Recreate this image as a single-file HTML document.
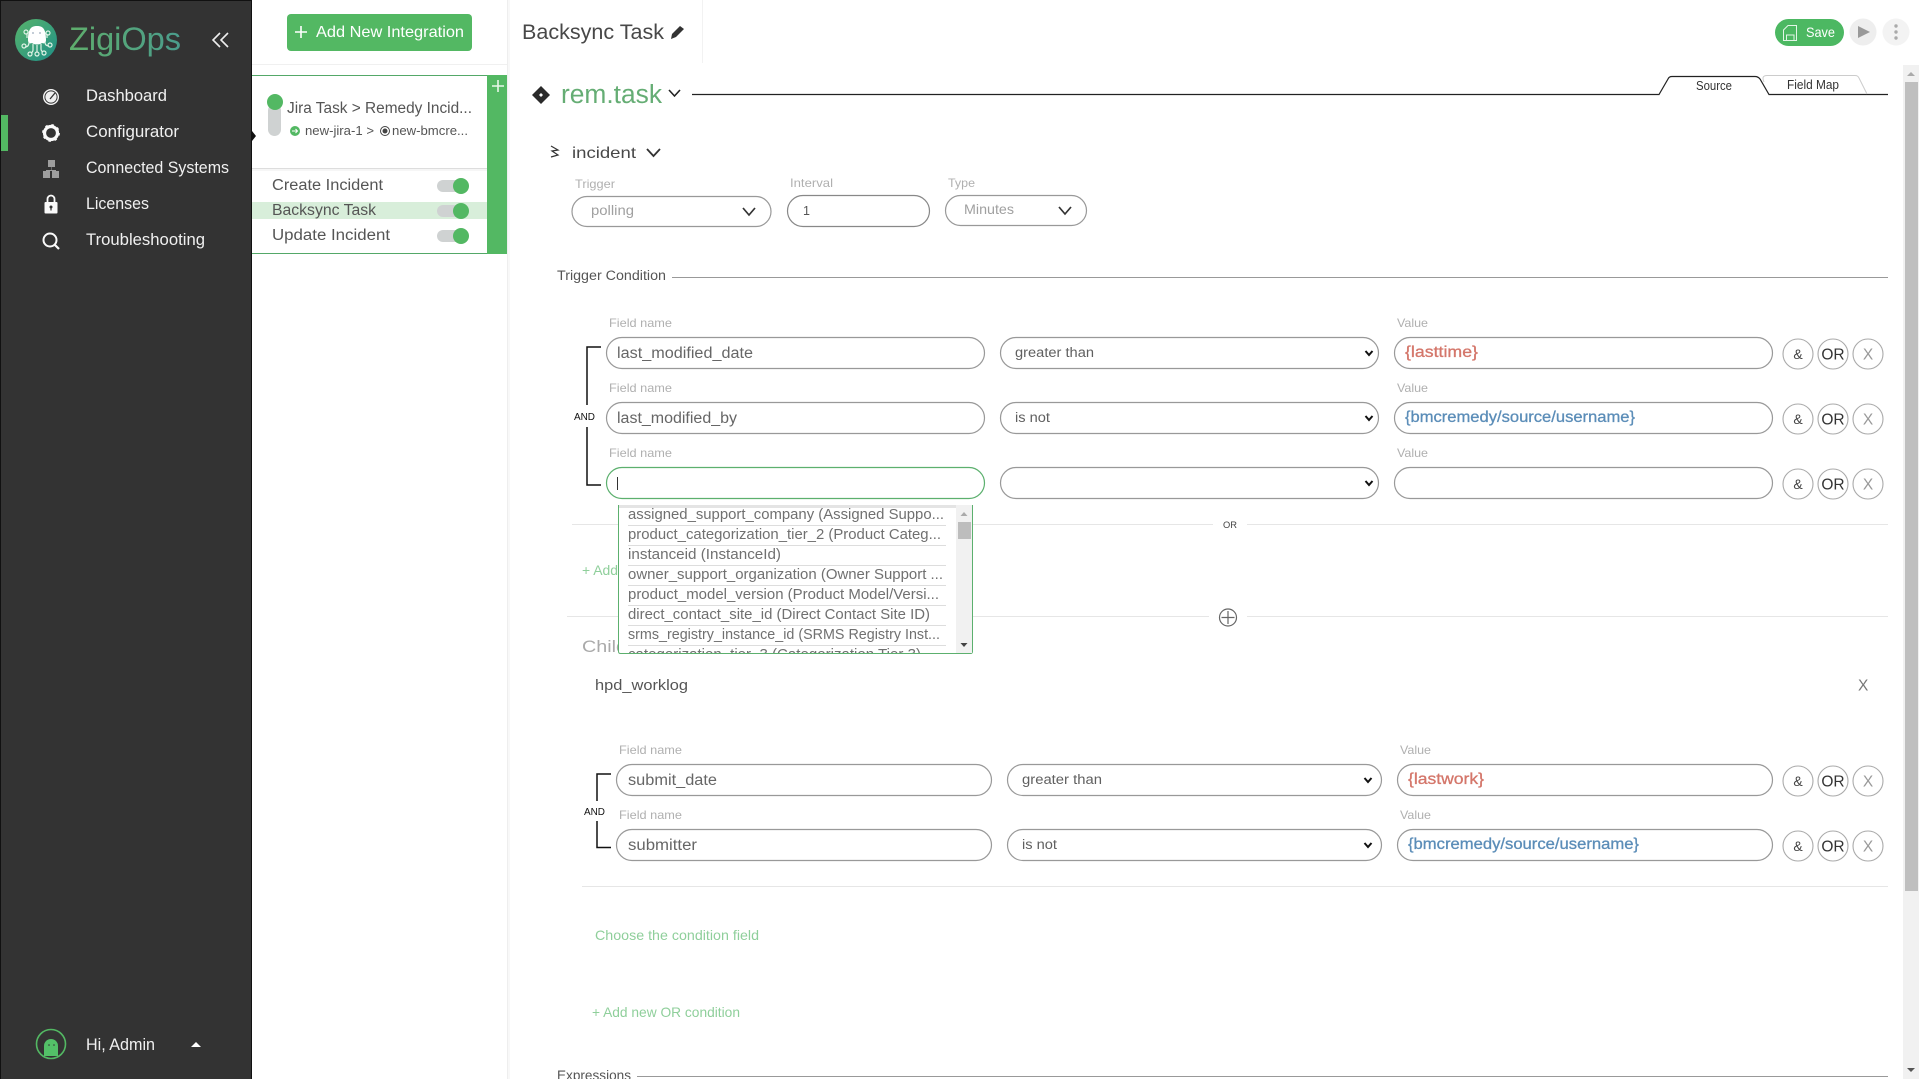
<!DOCTYPE html>
<html lang="en"><head><meta charset="utf-8"><title>ZigiOps</title>
<style>
html,body{margin:0;padding:0;background:#fff;overflow:hidden}
svg{display:block}
text{font-family:"Liberation Sans",sans-serif;fill:#555;white-space:pre}
.l{font-size:12px;fill:#b0b0b0}
.v{font-size:15.5px;fill:#666}
.s{font-size:13.5px;fill:#606060}
.n{font-size:16.5px;fill:#f0f0f0}
.i{fill:none;stroke:#999;stroke-width:1.2}
.c{fill:#fff;stroke:#aaa;stroke-width:1.1}
.b{font-size:14px;fill:#444;text-anchor:middle}
.o{font-size:15.5px;fill:#333;text-anchor:middle}
.x{font-size:15.5px;fill:#999;text-anchor:middle}
.d{font-size:14.5px;fill:#707070}
.k{fill:none;stroke:#111;stroke-width:1.5}
.h{fill:none;stroke:#111;stroke-width:2}
.g{font-size:14px;fill:#8fcf9b}
.r{font-size:15.5px;fill:#d4766a;stroke:#d4766a;stroke-width:.3}
.u{font-size:15.5px;fill:#5b8db8;stroke:#5b8db8;stroke-width:.3}
</style></head><body>
<svg width="1919" height="1079" viewBox="0 0 1919 1079" xmlns="http://www.w3.org/2000/svg">
<defs>
<linearGradient id="lg" x1="0" y1="0" x2="1" y2="1"><stop offset="0" stop-color="#58b46c"/><stop offset="1" stop-color="#1f8f86"/></linearGradient>
<linearGradient id="tg" gradientUnits="userSpaceOnUse" x1="69" y1="0" x2="181" y2="0"><stop offset="0" stop-color="#5fae6c"/><stop offset="1" stop-color="#4a9c8c"/></linearGradient>
<clipPath id="dd"><rect x="619" y="505" width="338" height="148"/></clipPath>
</defs>
<rect width="1919" height="1079" fill="#fff"/>

<!-- sidebar -->
<rect x="0" y="0" width="252" height="1079" fill="#333"/>
<rect x="0" y="0" width="252" height="1" fill="#111"/>
<rect x="0" y="0" width="1" height="1079" fill="#111"/>
<rect x="251" y="0" width="1" height="1079" fill="#111"/>
<circle cx="36" cy="40" r="21" fill="url(#lg)"/>
<path d="M28 40C28 29 31 26 37 26S46 29 46 40C46 43 44 44 42 43 40 45 34 45 32 43 30 44 28 43 28 40Z" fill="#fff"/>
<g fill="none" stroke="#dff3e6" stroke-width="1.2"><path d="M29 42Q29 47 25 47"/><path d="M33 44V50Q33 52 31 53"/><path d="M37 45V52"/><path d="M41 44V49Q41 51 43 52"/><path d="M45 42Q45 46 49 46"/><path d="M27 38V34"/><path d="M47 38V34"/><circle cx="26" cy="32" r="2"/><circle cx="48" cy="33" r="2"/><circle cx="24" cy="46" r="2"/><circle cx="50" cy="45" r="2"/><circle cx="30" cy="54" r="2"/><circle cx="37" cy="54" r="2"/><circle cx="44" cy="53" r="2"/></g>
<circle cx="33" cy="33" r=".9" fill="#9ab"/><circle cx="40" cy="33" r=".9" fill="#9ab"/>
<text x="69" y="50" font-size="32" style="fill:url(#tg)" textLength="112" lengthAdjust="spacingAndGlyphs">ZigiOps</text>
<path d="M220 33L213 40 220 47M228 33L221 40 228 47" fill="none" stroke="#eee" stroke-width="1.6"/>

<rect x="1" y="115" width="7" height="36" fill="#53b863"/>
<text class="n" x="86" y="101" textLength="81" lengthAdjust="spacingAndGlyphs">Dashboard</text>
<text class="n" x="86" y="137" textLength="93" lengthAdjust="spacingAndGlyphs">Configurator</text>
<text class="n" x="86" y="173" textLength="143" lengthAdjust="spacingAndGlyphs">Connected Systems</text>
<text class="n" x="86" y="209" textLength="63" lengthAdjust="spacingAndGlyphs">Licenses</text>
<text class="n" x="86" y="245" textLength="119" lengthAdjust="spacingAndGlyphs">Troubleshooting</text>
<!-- nav icons -->
<circle cx="51" cy="97" r="8" fill="#f5f5f5"/><circle cx="51" cy="97" r="6.6" fill="#333"/><circle cx="51" cy="97" r="5.6" fill="#f0f0f0"/><path d="M50 99L55 93" stroke="#333" stroke-width="1.3"/>
<circle cx="51" cy="133" r="6.5" fill="none" stroke="#fafafa" stroke-width="3.2"/><circle cx="51" cy="133" r="8" fill="none" stroke="#fafafa" stroke-width="1.8" stroke-dasharray="2.5 3.8"/>
<g fill="#9e9e9e"><rect x="48" y="160" width="7" height="7"/><rect x="43" y="171" width="7" height="7"/><rect x="52" y="171" width="7" height="7"/><path d="M51 167V170H46V171H56V170H51.500V167Z"/></g>
<rect x="44.500" y="202" width="13" height="11.500" rx="1" fill="#fafafa"/><path d="M47.500 202V199A3.500 3.500 0 0 1 54.500 199V202" fill="none" stroke="#fafafa" stroke-width="1.800"/><circle cx="51" cy="207" r="1.500" fill="#333"/><rect x="50.400" y="207" width="1.200" height="3.500" fill="#333"/>
<circle cx="50" cy="240" r="6.500" fill="none" stroke="#fafafa" stroke-width="2"/><path d="M54.500 244.500L59 249" stroke="#fafafa" stroke-width="2.200"/>
<!-- user -->
<circle cx="51" cy="1044" r="14.500" fill="none" stroke="#53b863" stroke-width="1.600"/>
<path d="M44 1056V1046A7 7 0 0 1 58 1046V1056Z" fill="#53c168"/><circle cx="49" cy="1045" r=".8" fill="#333"/><circle cx="54" cy="1045" r=".8" fill="#333"/>
<text class="n" x="86" y="1050" textLength="69" lengthAdjust="spacingAndGlyphs">Hi, Admin</text>
<path d="M191 1047L196 1042 201 1047Z" fill="#fff"/>
<path d="M252 131L256 136 252 141Z" fill="#111"/>

<!-- panel -->
<rect x="507" y="0" width="1" height="1079" fill="#eee"/>
<rect x="508" y="0" width="2" height="1079" fill="#f8f8f8"/>
<rect x="287" y="14" width="185" height="37" rx="4" fill="#53b863"/>
<path d="M301 26V38M295 32H307" stroke="#fff" stroke-width="1.600"/>
<text x="316" y="37" font-size="16" style="fill:#fff" textLength="148" lengthAdjust="spacingAndGlyphs">Add New Integration</text>
<rect x="252" y="64" width="255" height="1" fill="#f0f0f0"/>
<rect x="252" y="75" width="235" height="1" fill="#53a868"/>
<rect x="252" y="253" width="235" height="1" fill="#53a868"/>
<rect x="487" y="75" width="20" height="179" fill="#53b863"/>
<path d="M498 80V92M492 86H504" stroke="#e8f7ea" stroke-width="1.600"/>
<rect x="268" y="104" width="13" height="32" rx="6.500" fill="#cfd2d2"/>
<circle cx="275" cy="102" r="8" fill="#53b863"/>
<text x="287" y="113" font-size="15.500" textLength="185" lengthAdjust="spacingAndGlyphs">Jira Task &gt; Remedy Incid...</text>
<circle cx="295" cy="131" r="5" fill="#53b863"/><path d="M292 131H297M295.500 129L297.500 131 295.500 133" fill="none" stroke="#fff" stroke-width="1"/>
<text x="305" y="135" font-size="13" textLength="69" lengthAdjust="spacingAndGlyphs">new-jira-1 &gt;</text>
<circle cx="385" cy="131" r="4.500" fill="none" stroke="#444" stroke-width="1"/><circle cx="385" cy="131" r="2.500" fill="#444"/>
<text x="392" y="135" font-size="13" textLength="76" lengthAdjust="spacingAndGlyphs">new-bmcre...</text>
<rect x="252" y="168" width="235" height="1" fill="#ddd"/>
<rect x="252" y="169" width="235" height="2" fill="#f6f6f6"/>
<rect x="252" y="202" width="235" height="17" fill="#d8eeda"/>
<text x="272" y="190" font-size="15.500" textLength="111" lengthAdjust="spacingAndGlyphs">Create Incident</text>
<text x="272" y="215" font-size="15.500" textLength="104" lengthAdjust="spacingAndGlyphs">Backsync Task</text>
<text x="272" y="240" font-size="15.500" textLength="118" lengthAdjust="spacingAndGlyphs">Update Incident</text>
<rect x="437" y="180" width="28" height="12" rx="6" fill="#cfd2d2"/><circle cx="461" cy="186" r="8" fill="#53b863"/>
<rect x="437" y="205" width="28" height="12" rx="6" fill="#cfd2d2"/><circle cx="461" cy="211" r="8" fill="#53b863"/>
<rect x="437" y="230" width="28" height="12" rx="6" fill="#cfd2d2"/><circle cx="461" cy="236" r="8" fill="#53b863"/>

<!-- header -->
<text x="522" y="39" font-size="21" style="fill:#484848" textLength="142" lengthAdjust="spacingAndGlyphs">Backsync Task</text>
<path d="M671 39L672 34 680 26 684 29 676 37Z" fill="#333"/>
<rect x="702" y="0" width="1" height="63" fill="#f2f2f2"/>
<rect x="1775" y="19" width="69" height="27" rx="13.500" fill="#4cb862"/>
<path d="M1788 25.500H1796.500V40.500H1783.500V30Z M1786.500 40.500V35H1794V40.500" fill="none" stroke="#e2f5e6" stroke-width="1"/>
<text x="1806" y="37" font-size="14" style="fill:#fff" textLength="29" lengthAdjust="spacingAndGlyphs">Save</text>
<circle cx="1863" cy="32" r="13.500" fill="#eee"/><path d="M1858 26L1870 32 1858 38Z" fill="#999"/>
<circle cx="1896" cy="32" r="13.500" fill="#f3f3f3"/><g fill="#aaa"><circle cx="1896" cy="26" r="1.700"/><circle cx="1896" cy="32" r="1.700"/><circle cx="1896" cy="38" r="1.700"/></g>

<!-- title row -->
<path d="M541 86L550 95 541 104 532 95Z" fill="#2a2a2a"/><path d="M541 93L543 95 541 97 539 95Z" fill="#fff"/>
<text x="561" y="103" font-size="25.500" style="fill:#65ad74" textLength="101" lengthAdjust="spacingAndGlyphs">rem.task</text>
<path d="M669 90L674.500 96 680 90" fill="none" stroke="#222" stroke-width="1.600"/>
<path d="M692 94.500H1659L1668 79Q1669 76.500 1672 76.500H1755Q1758 76.500 1760 79L1769 94.500H1888" fill="none" stroke="#222" stroke-width="1.200"/>
<path d="M1764 82Q1761 75.500 1767 75.500H1855Q1858 75.500 1859 78L1867 94" fill="none" stroke="#ccc" stroke-width="1"/>
<text x="1696" y="90" font-size="12.500" style="fill:#333" textLength="36" lengthAdjust="spacingAndGlyphs">Source</text>
<text x="1787" y="89" font-size="12.500" style="fill:#333" textLength="52" lengthAdjust="spacingAndGlyphs">Field Map</text>

<!-- scrollbar -->
<rect x="1903" y="65" width="16" height="1014" fill="#f1f1f1"/>
<rect x="1905" y="82" width="13" height="809" fill="#bfbfbf"/>
<path d="M1907 76L1911 72 1915 76Z" fill="#aaa"/>
<path d="M1907 1068L1911 1072 1915 1068Z" fill="#555"/>

<!-- incident -->
<path d="M551 146L558 150 552 151 558 155 551 157" fill="none" stroke="#333" stroke-width="1.200"/>
<text x="572" y="158" font-size="16" style="fill:#484848" textLength="64" lengthAdjust="spacingAndGlyphs">incident</text>
<path d="M647 149L653.500 156 660 149" fill="none" stroke="#333" stroke-width="1.800"/>
<text class="l" x="575" y="188" textLength="40" lengthAdjust="spacingAndGlyphs">Trigger</text>
<text class="l" x="790" y="187" textLength="43" lengthAdjust="spacingAndGlyphs">Interval</text>
<text class="l" x="948" y="187" textLength="27" lengthAdjust="spacingAndGlyphs">Type</text>
<rect class="i" x="572" y="196.500" width="199" height="30" rx="15"/>
<rect class="i" x="787.500" y="195.500" width="142" height="31" rx="15.500" style="stroke:#888"/>
<rect class="i" x="945.500" y="195.500" width="141" height="30" rx="15"/>
<text x="591" y="215" font-size="14" style="fill:#a0a0a0" textLength="43" lengthAdjust="spacingAndGlyphs">polling</text>
<text x="803" y="215" font-size="12.500">1</text>
<text x="964" y="214" font-size="14" style="fill:#a0a0a0" textLength="50" lengthAdjust="spacingAndGlyphs">Minutes</text>
<path d="M743 208L749 215 755 208M1059 207L1065 214 1071 207" fill="none" stroke="#333" stroke-width="1.700"/>
<text x="557" y="280" font-size="13.500" textLength="109" lengthAdjust="spacingAndGlyphs">Trigger Condition</text>
<rect x="672" y="277" width="1216" height="1" fill="#999"/>

<!-- brackets -->
<path class="k" d="M601 347H587V405M587 427V485H601"/>
<text x="574" y="420" font-size="10" style="fill:#111" textLength="21" lengthAdjust="spacingAndGlyphs">AND</text>

<!-- rows -->
<text class="l" x="609" y="327" textLength="63" lengthAdjust="spacingAndGlyphs">Field name</text>
<text class="l" x="609" y="392" textLength="63" lengthAdjust="spacingAndGlyphs">Field name</text>
<text class="l" x="609" y="457" textLength="63" lengthAdjust="spacingAndGlyphs">Field name</text>
<text class="l" x="1397" y="327" textLength="31" lengthAdjust="spacingAndGlyphs">Value</text>
<text class="l" x="1397" y="392" textLength="31" lengthAdjust="spacingAndGlyphs">Value</text>
<text class="l" x="1397" y="457" textLength="31" lengthAdjust="spacingAndGlyphs">Value</text>

<rect class="i" x="606.500" y="337.500" width="378" height="31" rx="15.500"/>
<rect class="i" x="606.500" y="402.500" width="378" height="31" rx="15.500"/>
<rect class="i" x="606.500" y="467.500" width="378" height="31" rx="15.500" style="stroke:#5cb06e"/>
<rect x="617" y="477" width="1" height="13" fill="#333"/>
<text class="v" x="617" y="358" textLength="136" lengthAdjust="spacingAndGlyphs">last_modified_date</text>
<text class="v" x="617" y="423" textLength="120" lengthAdjust="spacingAndGlyphs">last_modified_by</text>

<rect class="i" x="1000.500" y="337.500" width="378" height="31" rx="15.500"/>
<rect class="i" x="1000.500" y="402.500" width="378" height="31" rx="15.500"/>
<rect class="i" x="1000.500" y="467.500" width="378" height="31" rx="15.500"/>
<text class="s" x="1015" y="357" textLength="79" lengthAdjust="spacingAndGlyphs">greater than</text>
<text class="s" x="1015" y="422" textLength="35" lengthAdjust="spacingAndGlyphs">is not</text>
<path class="h" d="M1365.500 351L1369 355 1372.500 351M1365.500 416L1369 420 1372.500 416M1365.500 481L1369 485 1372.500 481"/>

<rect class="i" x="1394.500" y="337.500" width="378" height="31" rx="15.500"/>
<rect class="i" x="1394.500" y="402.500" width="378" height="31" rx="15.500"/>
<rect class="i" x="1394.500" y="467.500" width="378" height="31" rx="15.500"/>
<text class="r" x="1405" y="357" textLength="73" lengthAdjust="spacingAndGlyphs">{lasttime}</text>
<text class="u" x="1405" y="422" textLength="230" lengthAdjust="spacingAndGlyphs">{bmcremedy/source/username}</text>

<!-- round buttons -->
<g>
<circle class="c" cx="1798" cy="354" r="15"/><circle class="c" cx="1833" cy="354" r="15"/><circle class="c" cx="1868" cy="354" r="15"/>
<circle class="c" cx="1798" cy="419" r="15"/><circle class="c" cx="1833" cy="419" r="15"/><circle class="c" cx="1868" cy="419" r="15"/>
<circle class="c" cx="1798" cy="484" r="15"/><circle class="c" cx="1833" cy="484" r="15"/><circle class="c" cx="1868" cy="484" r="15"/>
<circle class="c" cx="1798" cy="781" r="15"/><circle class="c" cx="1833" cy="781" r="15"/><circle class="c" cx="1868" cy="781" r="15"/>
<circle class="c" cx="1798" cy="846" r="15"/><circle class="c" cx="1833" cy="846" r="15"/><circle class="c" cx="1868" cy="846" r="15"/>
</g>
<g>
<text class="b" x="1798" y="359">&amp;</text><text class="o" x="1833" y="359.500">OR</text><text class="x" x="1868" y="359.500">X</text>
<text class="b" x="1798" y="424">&amp;</text><text class="o" x="1833" y="424.500">OR</text><text class="x" x="1868" y="424.500">X</text>
<text class="b" x="1798" y="489">&amp;</text><text class="o" x="1833" y="489.500">OR</text><text class="x" x="1868" y="489.500">X</text>
<text class="b" x="1798" y="786">&amp;</text><text class="o" x="1833" y="786.500">OR</text><text class="x" x="1868" y="786.500">X</text>
<text class="b" x="1798" y="851">&amp;</text><text class="o" x="1833" y="851.500">OR</text><text class="x" x="1868" y="851.500">X</text>
</g>

<!-- dividers -->
<path d="M572 524.500H1213M1247 524.500H1888" stroke="#e6e6e6" stroke-width="1" fill="none"/>
<text x="1223" y="528" font-size="9.500" style="fill:#444" textLength="14" lengthAdjust="spacingAndGlyphs">OR</text>
<text x="582" y="575" font-size="14" style="fill:#8fcf9b" textLength="36" lengthAdjust="spacingAndGlyphs">+ Add</text>
<path d="M567 616.500H1209M1247 616.500H1888" stroke="#e6e6e6" stroke-width="1" fill="none"/>
<circle cx="1228" cy="617.500" r="8.500" fill="#fff" stroke="#666" stroke-width="1.200"/>
<path d="M1228 611V624M1221.500 617.500H1234.500" stroke="#666" stroke-width="1.200"/>
<text x="582" y="652" font-size="17" style="fill:#aaa" textLength="45" lengthAdjust="spacingAndGlyphs">Child</text>

<!-- dropdown -->
<rect x="618.500" y="505" width="354" height="148.500" rx="2" fill="#fff"/>
<path d="M618.500 505V651.500Q618.500 653.500 620.500 653.500H970.500Q972.500 653.500 972.500 651.500V505" fill="none" stroke="#5cb06e" stroke-width="1"/>
<rect x="619" y="505" width="337" height="3" fill="#e4e4e4"/>
<rect x="956" y="505" width="16" height="148" fill="#f1f1f1"/>
<rect x="958" y="522" width="13" height="17" fill="#bdbdbd"/>
<path d="M960.500 516L964 512 967.500 516Z" fill="#aaa"/><path d="M960.500 643L964 647 967.500 643Z" fill="#444"/>
<g fill="#ddd"><rect x="628" y="525" width="318" height="1"/><rect x="628" y="545" width="318" height="1"/><rect x="628" y="565" width="318" height="1"/><rect x="628" y="585" width="318" height="1"/><rect x="628" y="605" width="318" height="1"/><rect x="628" y="625" width="318" height="1"/><rect x="628" y="645" width="318" height="1"/></g>
<g clip-path="url(#dd)">
<text class="d" x="628" y="519" textLength="316" lengthAdjust="spacingAndGlyphs">assigned_support_company (Assigned Suppo...</text>
<text class="d" x="628" y="539" textLength="313" lengthAdjust="spacingAndGlyphs">product_categorization_tier_2 (Product Categ...</text>
<text class="d" x="628" y="559" textLength="153" lengthAdjust="spacingAndGlyphs">instanceid (InstanceId)</text>
<text class="d" x="628" y="579" textLength="315" lengthAdjust="spacingAndGlyphs">owner_support_organization (Owner Support ...</text>
<text class="d" x="628" y="599" textLength="311" lengthAdjust="spacingAndGlyphs">product_model_version (Product Model/Versi...</text>
<text class="d" x="628" y="619" textLength="302" lengthAdjust="spacingAndGlyphs">direct_contact_site_id (Direct Contact Site ID)</text>
<text class="d" x="628" y="639" textLength="312" lengthAdjust="spacingAndGlyphs">srms_registry_instance_id (SRMS Registry Inst...</text>
<text class="d" x="628" y="659" textLength="293" lengthAdjust="spacingAndGlyphs">categorization_tier_3 (Categorization Tier 3)</text>
</g>

<!-- child -->
<text x="595" y="690" font-size="14.500" textLength="93" lengthAdjust="spacingAndGlyphs">hpd_worklog</text>
<text x="1858" y="690.500" font-size="15.500" style="fill:#777">X</text>
<text class="l" x="619" y="754" textLength="63" lengthAdjust="spacingAndGlyphs">Field name</text>
<text class="l" x="619" y="819" textLength="63" lengthAdjust="spacingAndGlyphs">Field name</text>
<text class="l" x="1400" y="754" textLength="31" lengthAdjust="spacingAndGlyphs">Value</text>
<text class="l" x="1400" y="819" textLength="31" lengthAdjust="spacingAndGlyphs">Value</text>
<path class="k" d="M611 774H597V801M597 821V847.500H611"/>
<text x="584" y="815" font-size="10" style="fill:#111" textLength="21" lengthAdjust="spacingAndGlyphs">AND</text>
<rect class="i" x="616.500" y="764.500" width="375" height="31" rx="15.500"/>
<rect class="i" x="616.500" y="829.500" width="375" height="31" rx="15.500"/>
<text class="v" x="628" y="785" textLength="89" lengthAdjust="spacingAndGlyphs">submit_date</text>
<text class="v" x="628" y="850" textLength="69" lengthAdjust="spacingAndGlyphs">submitter</text>
<rect class="i" x="1007.500" y="764.500" width="374" height="31" rx="15.500"/>
<rect class="i" x="1007.500" y="829.500" width="374" height="31" rx="15.500"/>
<text class="s" x="1022" y="784" textLength="80" lengthAdjust="spacingAndGlyphs">greater than</text>
<text class="s" x="1022" y="849" textLength="35" lengthAdjust="spacingAndGlyphs">is not</text>
<path class="h" d="M1364.500 778L1368 782 1371.500 778M1364.500 843L1368 847 1371.500 843"/>
<rect class="i" x="1397.500" y="764.500" width="375" height="31" rx="15.500"/>
<rect class="i" x="1397.500" y="829.500" width="375" height="31" rx="15.500"/>
<text class="r" x="1408" y="784" textLength="76" lengthAdjust="spacingAndGlyphs">{lastwork}</text>
<text class="u" x="1408" y="849" textLength="231" lengthAdjust="spacingAndGlyphs">{bmcremedy/source/username}</text>
<rect x="582" y="886" width="1306" height="1" fill="#e6e6e6"/>
<text class="g" x="595" y="940" textLength="164" lengthAdjust="spacingAndGlyphs">Choose the condition field</text>
<text class="g" x="592" y="1017" textLength="148" lengthAdjust="spacingAndGlyphs">+ Add new OR condition</text>
<text x="557" y="1080" font-size="13.500" textLength="74" lengthAdjust="spacingAndGlyphs">Expressions</text>
<rect x="637" y="1076" width="1251" height="1" fill="#999"/>
</svg>
</body></html>
